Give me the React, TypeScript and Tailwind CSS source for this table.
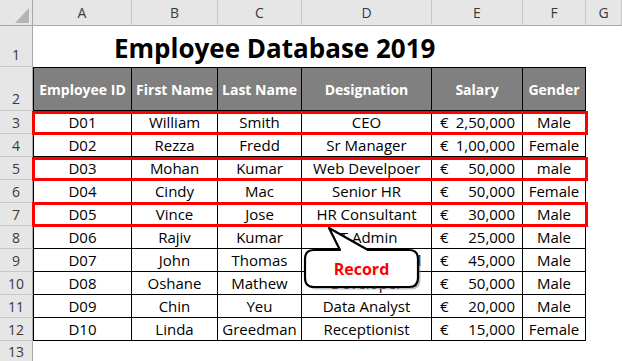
import React from "react";

interface Row {
  id: string;
  first: string;
  last: string;
  designation: string;
  salary: string;
  gender: string;
}

const rows: Row[] = [
  { id: "D01", first: "William", last: "Smith", designation: "CEO", salary: "2,50,000", gender: "Male" },
  { id: "D02", first: "Rezza", last: "Fredd", designation: "Sr Manager", salary: "1,00,000", gender: "Female" },
  { id: "D03", first: "Mohan", last: "Kumar", designation: "Web Develpoer", salary: "50,000", gender: "male" },
  { id: "D04", first: "Cindy", last: "Mac", designation: "Senior HR", salary: "50,000", gender: "Female" },
  { id: "D05", first: "Vince", last: "Jose", designation: "HR Consultant", salary: "30,000", gender: "Male" },
  { id: "D06", first: "Rajiv", last: "Kumar", designation: "IT Admin", salary: "25,000", gender: "Male" },
  { id: "D07", first: "John", last: "Thomas", designation: "Hardware Head", salary: "45,000", gender: "Male" },
  { id: "D08", first: "Oshane", last: "Mathew", designation: "Developer", salary: "50,000", gender: "Male" },
  { id: "D09", first: "Chin", last: "Yeu", designation: "Data Analyst", salary: "20,000", gender: "Male" },
  { id: "D10", first: "Linda", last: "Greedman", designation: "Receptionist", salary: "15,000", gender: "Female" },
];

const headers = ["Employee ID", "First Name", "Last Name", "Designation", "Salary", "Gender"];
const letters = ["A", "B", "C", "D", "E", "F", "G"];

// rows 3, 5 and 7 are boxed in red
const highlighted = [
  { top: "top-[111px]", h: "h-[24px]" },
  { top: "top-[157px]", h: "h-[24px]" },
  { top: "top-[202px]", h: "h-[25px]" },
];

function RowHead({ n, className = "items-end pb-[1px]" }: { n: number; className?: string }) {
  return (
    <div
      className={`bg-[#e6e6e6] border-r border-b border-r-[#a8a8a8] border-b-[#c8c8c8] flex justify-center text-[14px] text-[#3a3a3a] ${className}`}
    >
      {n}
    </div>
  );
}

function Callout() {
  const shape =
    "M 14 28 L 40 28 L 29 6 L 68 28 L 109 28 Q 118 28 118 37 L 118 56 Q 118 65 109 65 L 14 65 Q 5 65 5 56 L 5 37 Q 5 28 14 28 Z";
  return (
    <div className="absolute left-[300px] top-[222px] w-[130px] h-[72px]">
      <svg width="130" height="72" viewBox="0 0 130 72" className="absolute inset-0">
        <path d={shape} transform="translate(2.5 2.5)" fill="#8a8a8a" opacity="0.55" />
        <path d={shape} fill="#ffffff" stroke="#000000" strokeWidth="2.2" strokeLinejoin="round" />
      </svg>
      <div className="absolute left-[5px] top-[28px] w-[113px] h-[37px] flex items-center justify-center text-[16px] font-bold text-[#ff0000]">
        Record
      </div>
    </div>
  );
}

export default function App() {
  const base = "border-r border-b border-black flex items-center text-[15px] text-black whitespace-nowrap overflow-hidden";
  const cell = `${base} justify-center`;

  return (
    <div className="w-[622px] h-[361px] overflow-hidden bg-white relative font-['Open_Sans',sans-serif]">
      <div className="grid grid-cols-[33px_99px_86px_84px_130px_91px_63px_1fr] grid-rows-[26px_41px_44px_repeat(10,23px)_24px]">
        {/* column letters */}
        <div className="bg-[#e6e6e6] border-r border-b border-r-[#a8a8a8] border-b-[#a8a8a8] relative">
          <svg width="33" height="26" className="absolute inset-0">
            <polygon points="15,23 29,8 29,23" fill="#b4b4b4" />
          </svg>
        </div>
        {letters.map((l) => (
          <div
            key={l}
            className="bg-[#e6e6e6] border-r border-b border-r-[#c6c6c6] border-b-[#a8a8a8] flex items-center justify-center text-[14px] text-[#3a3a3a]"
          >
            {l}
          </div>
        ))}

        {/* row 1: title */}
        <RowHead n={1} />
        <div className="col-span-6 flex items-end pl-[81px] pb-[2px] text-[26px] font-bold text-black leading-none">
          <span className="pb-[4px]">Employee Database 2019</span>
        </div>
        <div />

        {/* row 2: headers */}
        <RowHead n={2} />
        {headers.map((h, i) => (
          <div
            key={h}
            className={`bg-[#808080] border-t border-r border-b border-black flex items-center justify-center text-[14px] font-bold text-white whitespace-nowrap ${i === 0 ? "border-l" : ""}`}
          >
            {h}
          </div>
        ))}
        <div />

        {/* rows 3-12 */}
        {rows.map((r, i) => (
          <React.Fragment key={r.id}>
            <RowHead n={i + 3} className="items-center" />
            <div className={`${cell} border-l`}>{r.id}</div>
            <div className={cell}>{r.first}</div>
            <div className={cell}>{r.last}</div>
            <div className={cell}>{r.designation}</div>
            <div className={`${base} justify-between pl-[8px] pr-[7px]`}>
              <span>€</span>
              <span>{r.salary}</span>
            </div>
            <div className={cell}>{r.gender}</div>
            <div />
          </React.Fragment>
        ))}

        {/* row 13 */}
        <RowHead n={13} className="items-start border-b-0" />
        <div className="col-span-7" />
      </div>

      {highlighted.map((b) => (
        <div
          key={b.top}
          className={`absolute left-[32px] w-[556px] ${b.top} ${b.h} border-[3px] border-[#ff0000]`}
        />
      ))}

      <Callout />
    </div>
  );
}
